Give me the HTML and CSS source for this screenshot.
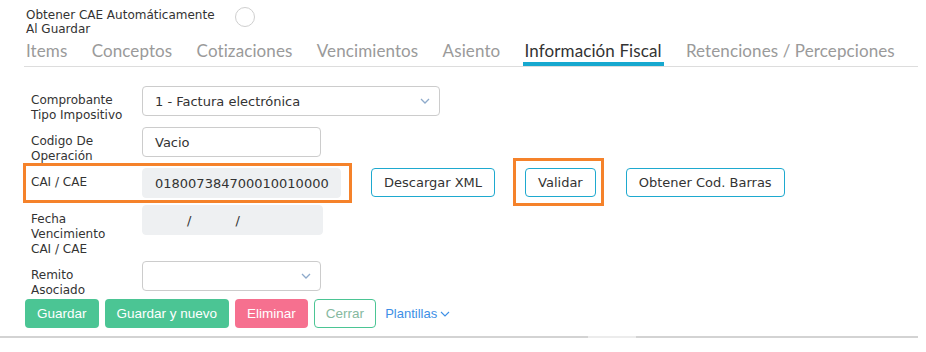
FILE: index.html
```html
<!DOCTYPE html>
<html lang="es">

<head>
    <meta charset="UTF-8">
    <title>Información Fiscal</title>
    <link rel="stylesheet" href="styles.css">
</head>

<body>
<div class="page">
    <div class="auto-cae">
        <span class="auto-cae__label">Obtener CAE Automáticamente Al Guardar</span>
        <span class="radio"></span>
    </div>

    <ul class="tabs">
        <li class="tabs__item">Items</li>
        <li class="tabs__item">Conceptos</li>
        <li class="tabs__item">Cotizaciones</li>
        <li class="tabs__item">Vencimientos</li>
        <li class="tabs__item">Asiento</li>
        <li class="tabs__item tabs__item--active">Información Fiscal</li>
        <li class="tabs__item">Retenciones / Percepciones</li>
    </ul>

    <div class="form">
        <div class="row">
            <label class="row__label">Comprobante Tipo Impositivo</label>
            <div class="field field--select field--wide">
                <span>1 - Factura electrónica</span>
                <svg class="chevron" width="10" height="6" viewBox="0 0 10 6">
                    <polyline points="1,1 5,5 9,1" fill="none" stroke="#8eaacb" stroke-width="1.3" />
                </svg>
            </div>
        </div>

        <div class="row">
            <label class="row__label">Codigo De Operación</label>
            <div class="field field--short">Vacio</div>
        </div>

        <div class="row">
            <div class="cae-group mark">
                <label class="row__label">CAI / CAE</label>
                <div class="field field--disabled field--cae">018007384700010010000</div>
            </div>
            <button class="btn-outline">Descargar XML</button>
            <div class="mark mark--btn">
                <button class="btn-outline btn-outline--flush">Validar</button>
            </div>
            <button class="btn-outline">Obtener Cod. Barras</button>
        </div>

        <div class="row">
            <label class="row__label">Fecha Vencimiento CAI / CAE</label>
            <div class="field field--disabled field--date">
                <span class="date-sep">/</span><span class="date-sep">/</span>
            </div>
        </div>

        <div class="row">
            <label class="row__label">Remito Asociado</label>
            <div class="field field--select field--short">
                <span></span>
                <svg class="chevron" width="10" height="6" viewBox="0 0 10 6">
                    <polyline points="1,1 5,5 9,1" fill="none" stroke="#8eaacb" stroke-width="1.3" />
                </svg>
            </div>
        </div>
    </div>

    <div class="actions">
        <button class="btn btn--green">Guardar</button>
        <button class="btn btn--green">Guardar y nuevo</button>
        <button class="btn btn--pink">Eliminar</button>
        <button class="btn btn--ghost">Cerrar</button>
        <a class="templates" href="#">Plantillas
            <svg width="10" height="6" viewBox="0 0 10 6">
                <polyline points="1,1 5,5 9,1" fill="none" stroke="#3d8fe6" stroke-width="1.1" />
            </svg>
        </a>
    </div>

    <div class="bottom-line"></div>
</div>
</body>

</html>
```

FILE: styles.css
```css
body {
  margin: 0;
  padding: 0;
  background-color: #FFFFFF;
  font-family: "DejaVu Sans", Verdana, sans-serif;
  font-size: 12px;
  color: #333333;
}

.page {
  width: 918px;
}

.auto-cae {
  display: flex;
  align-items: flex-start;
  padding: 8px 0 0 26px;
}

.auto-cae__label {
  width: 198px;
  margin-right: 11px;
  line-height: 14px;
}

.radio {
  width: 18px;
  height: 18px;
  margin-top: -1px;
  border: 1px solid #cfcfcf;
  border-radius: 50%;
}

.tabs {
  display: flex;
  margin: 4px 0 0 24px;
  padding: 0;
  list-style: none;
  border-bottom: 1px solid #dddddd;
  font-family: Lato, "Open Sans", sans-serif;
  font-size: 17px;
  letter-spacing: 0.1px;
  line-height: 20px;
}

.tabs__item {
  flex-shrink: 0;
  padding: 1px 2px 1px;
  margin-right: 20.3px;
  border-bottom: 4px solid transparent;
  color: #9a9a9a;
  white-space: nowrap;
}

.tabs__item--active {
  color: #333333;
  border-bottom-color: #17a8cf;
}

.form {
  padding: 19px 0 0 31px;
}

.row {
  display: flex;
  align-items: flex-start;
  margin-bottom: 7px;
}

.row__label {
  width: 96px;
  margin: 0 15px -3px 0;
  padding-top: 7px;
  line-height: 15px;
}

.field {
  display: flex;
  align-items: center;
  box-sizing: border-box;
  height: 30px;
  padding: 0 12px;
  border: 1px solid #cccccc;
  border-radius: 4px;
  font-size: 13px;
  color: #333333;
}

.field--select {
  justify-content: space-between;
}

.chevron {
  margin-right: -3px;
}

.field--wide {
  width: 298px;
}

.field--short {
  width: 179px;
}

.field--disabled {
  border-color: #eef0f2;
  background-color: #eef0f2;
}

.field--cae {
  width: 199px;
}

.field--date {
  width: 181px;
  padding: 0;
}

.date-sep {
  margin-left: 44px;
}

.cae-group {
  display: flex;
  align-items: flex-start;
}

.mark {
  position: relative;
}

.mark::after {
  content: "";
  position: absolute;
  top: -5px;
  left: -8px;
  right: -11px;
  bottom: -5px;
  border: 3px solid #f5822a;
  pointer-events: none;
}

.mark--btn {
  margin-left: 30px;
}

.mark--btn::after {
  top: -10px;
  left: -12px;
  right: -8px;
  bottom: -9px;
}

.btn-outline {
  box-sizing: border-box;
  height: 29px;
  margin-left: 30px;
  padding: 0 12px;
  background-color: #FFFFFF;
  border: 1px solid #1ea9cf;
  border-radius: 4px;
  font-family: "DejaVu Sans", Verdana, sans-serif;
  font-size: 13px;
  color: #333333;
}

.btn-outline--flush {
  margin-left: 0;
}

.actions {
  display: flex;
  align-items: center;
  gap: 6px;
  margin-top: -3px;
  padding-left: 25px;
}

.btn {
  box-sizing: border-box;
  height: 29px;
  padding: 0 12px;
  border: none;
  border-radius: 4px;
  font-family: "Liberation Sans", Arial, sans-serif;
  font-size: 13.5px;
  color: #FFFFFF;
}

.btn--green {
  background-color: #4bc594;
}

.btn--pink {
  background-color: #f6708f;
}

.btn--ghost {
  padding: 0 11px;
  background-color: #FFFFFF;
  border: 1px solid #4bc594;
  color: #86b9a0;
}

.templates {
  display: flex;
  align-items: center;
  gap: 3px;
  margin-left: 3px;
  font-family: "Liberation Sans", Arial, sans-serif;
  font-size: 13px;
  color: #3d8fe6;
  text-decoration: none;
}

.bottom-line {
  height: 2px;
  margin-top: 8px;
  background: linear-gradient(90deg, #d3d3d3 588px, #ececec 588px, #ececec 636px, #d3d3d3 636px);
}
```
